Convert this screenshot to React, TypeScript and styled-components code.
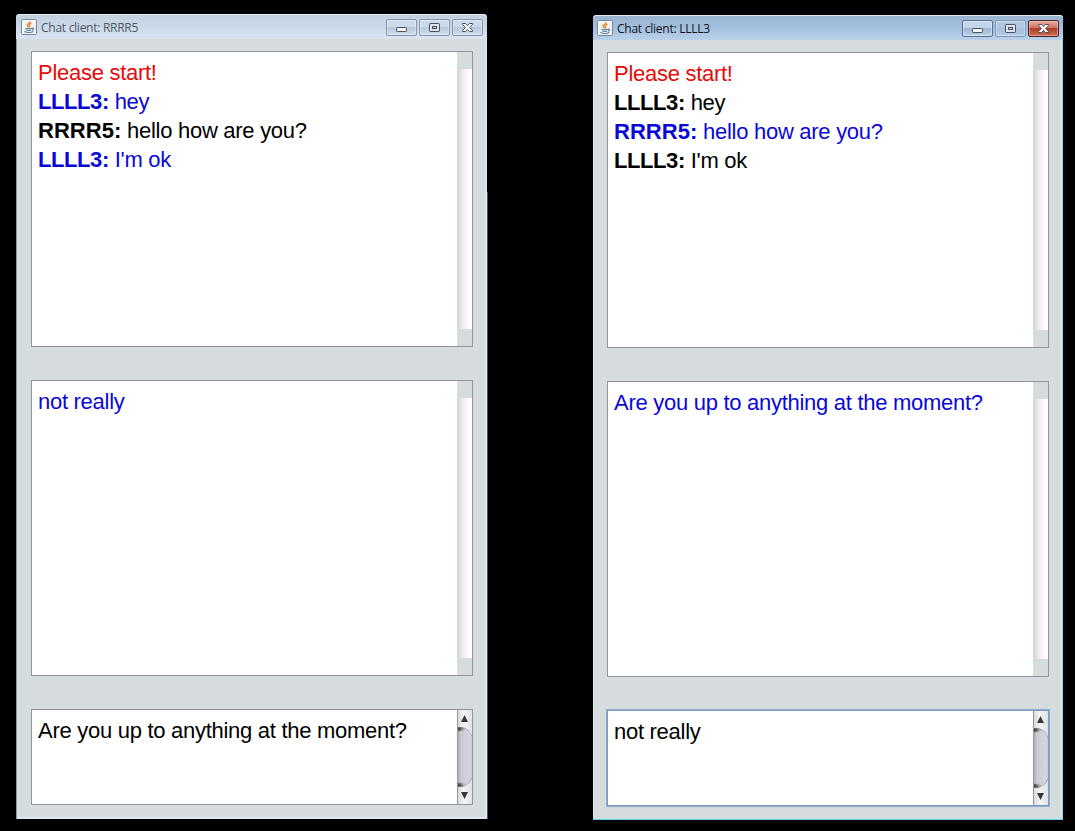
import React from "react";
import styled, { createGlobalStyle, css } from "styled-components";

const GlobalStyle = createGlobalStyle`
  * { box-sizing: border-box; }
  body { margin: 0; background: #000; overflow: hidden; }
`;

const Desktop = styled.main`
  display: flex;
  align-items: flex-start;
  gap: 106px;
  width: 1075px;
  height: 831px;
  padding: 14px 0 0 16px;
  background: #000;
`;

const Window = styled.section<{ $active?: boolean }>`
  position: relative;
  display: flex;
  flex-direction: column;
  width: ${(p) => (p.$active ? 470 : 471)}px;
  height: 805px;
  margin-top: ${(p) => (p.$active ? 1 : 0)}px;
  background: #d6dbde;
  border-radius: 4px 4px 0 0;
  box-shadow: ${(p) =>
    p.$active
      ? "inset 0 -1px #6fd3e6, inset -1px 0 #8fdcec, inset -2px 0 #d3e6ec, inset 0 -2px #c0e0e8, inset 1px 0 #d9eef3"
      : "inset 1px 0 #8b949c, inset 2px 0 #d6e4f0, inset -2px 0 #d8e8f4, inset 0 -2px #dde8f6"};
`;

const EdgeShade = styled.span`
  position: absolute;
  top: 178px;
  right: -1px;
  bottom: 0;
  width: 1px;
  background: #525659;
`;

const TitleBar = styled.header<{ $active?: boolean }>`
  display: flex;
  flex: none;
  align-items: flex-start;
  height: 25px;
  padding: 4px 4px 0 ${(p) => (p.$active ? 4 : 5)}px;
  border-top: 1px solid ${(p) => (p.$active ? "#dce9f4" : "#e2eaf1")};
  border-radius: 4px 4px 0 0;
  background: ${(p) =>
    p.$active
      ? "linear-gradient(#9ab3d0, #a4bfdf 50%, #b9d1ea)"
      : "linear-gradient(#c2cfdd, #cbd9e9 50%, #d9e5f3)"};
`;

const Title = styled.h1<{ $active?: boolean }>`
  flex: 1;
  margin: 1px 0 0 4px;
  font: 400 12px/16px "Open Sans", "Noto Sans", sans-serif;
  letter-spacing: ${(p) => (p.$active ? "-0.25px" : "-0.27px")};
  white-space: nowrap;
  color: ${(p) => (p.$active ? "#101418" : "#4e5860")};
`;

const Controls = styled.div`
  display: flex;
  gap: 2px;
`;

const tones = {
  idle: css`
    border-color: #8494ab;
    background: linear-gradient(#cddaea 45%, #b9c9dc 50%, #cddced);
  `,
  active: css`
    border-color: #5b7093;
    background: linear-gradient(#c2d5ea 45%, #9ab5d3 50%, #bcd6ed);
  `,
  muted: css`
    border-color: #8199b9;
    background: linear-gradient(#b1c8e3 45%, #a5bfdd 50%, #b3cee9);
  `,
  close: css`
    border-color: #4d1f2b;
    background: linear-gradient(#e0a08f 10%, #cf7565 45%, #b43b27 50%, #cc6e4d);
  `,
};

const ControlButton = styled.button<{ $tone: keyof typeof tones }>`
  display: block;
  width: 31px;
  height: 17px;
  padding: 0;
  border: 1px solid;
  border-radius: 2px;
  box-shadow: inset 0 0 0 1px rgba(255, 255, 255, 0.35);
  ${(p) => tones[p.$tone]}

  svg { display: block; }
`;

const Content = styled.div<{ $active?: boolean }>`
  display: flex;
  flex-direction: column;
  gap: 33px;
  padding: 12px 14px 0 ${(p) => (p.$active ? 14 : 15)}px;
`;

const Pane = styled.div<{ $small?: boolean; $focused?: boolean }>`
  display: flex;
  justify-content: space-between;
  height: ${(p) => (p.$small ? 96 : 296)}px;
  border: 1px solid ${(p) => (p.$focused ? "#8198bb" : "#8f959b")};
  background: #fff;
  ${(p) => p.$focused && "box-shadow: 0 0 0 1px #8eacd0;"}
`;

const Messages = styled.div`
  padding: 6px 0 0 6px;
  font: 400 22px/29px "Liberation Sans", Arial, sans-serif;
  letter-spacing: -0.28px;
  white-space: nowrap;
`;

const Line = styled.p<{ $color: string }>`
  margin: 0;
  color: ${(p) => p.$color};
`;

const Sender = styled.b<{ $tracking: number }>`
  letter-spacing: ${(p) => p.$tracking}px;
`;

const Track = styled.div`
  display: flex;
  flex-direction: column;
  justify-content: space-between;
  width: 15px;
  background: linear-gradient(90deg, #d2ced4, #e8e5eb 28%, #f8f6fb 60%, #fff);
`;

const TrackCap = styled.span`
  height: 17px;
  background: #d6dbde;
`;

const ScrollSvg = styled.svg`
  display: block;
  flex: none;
`;

const BLUE = "#0a08d8";
const RED = "#e60a0a";
const BLACK = "#000";

function JavaIcon() {
  return (
    <svg width="16" height="16" viewBox="0 0 16 16" fill="none">
      <rect x=".5" y=".5" width="15" height="15" rx="1.2" fill="#f1f3f4" stroke="#71869c" />
      <path d="M1.5 14.5V1.5h13" stroke="#fff" />
      <path d="M9.2 2C9.8 4 5.5 4.6 6.1 6.5c.2.7 1.2 1.1 1.2 2M10.5 4.4C7.8 5.4 8 6 8.5 6.8c.4.7 0 1.2-.4 1.7" stroke="#e58a37" strokeWidth="1.4" />
      <path d="M4.5 9.2c1.8.7 4.8.6 6.3 0M5.2 11c1.6.5 3.7.5 5 0M10.8 9.3c2.5-.8 2.3 1.4.2 2M3.3 12.6c2.5 1 7 .9 9.2-.1" stroke="#547b9b" strokeWidth="1.1" />
    </svg>
  );
}

function ControlGlyph({ kind }: { kind: "min" | "max" | "close" }) {
  return (
    <svg width="29" height="15" viewBox="0 0 29 15">
      {kind === "min" && (
        <rect x="9.5" y="7.5" width="10" height="4" rx=".7" fill="#f4f5f7" stroke="#4b515c" />
      )}
      {kind === "max" && (
        <>
          <rect x="9.5" y="3.5" width="10" height="8" rx=".7" fill="#dde3ea" stroke="#4b515c" />
          <rect x="12.5" y="6.5" width="4" height="2" fill="#b4c6da" stroke="#4b515c" />
        </>
      )}
      {kind === "close" && (
        <path
          d="M9.5 3.5h3l2 2.1 2-2.1h3v1l-2.8 3 2.8 3v1h-3l-2-2.1-2 2.1h-3v-1l2.8-3-2.8-3z"
          fill="#fafafa"
          stroke="#4b4e5a"
        />
      )}
    </svg>
  );
}

function ScrollBar({ id }: { id: string }) {
  return (
    <ScrollSvg width="15" height="94" viewBox="0 0 15 94">
      <defs>
        <linearGradient id={`${id}-face`}>
          <stop stopColor="#d4d5dc" />
          <stop offset=".45" stopColor="#f4f4f7" />
          <stop offset="1" stopColor="#e0e1e7" />
        </linearGradient>
        <linearGradient id={`${id}-thumb`}>
          <stop stopColor="#a4a4ac" />
          <stop offset=".25" stopColor="#c9c9d1" />
          <stop offset=".8" stopColor="#d6d6df" />
          <stop offset="1" stopColor="#cdcdd5" />
        </linearGradient>
        <radialGradient id={`${id}-shade`} cx="0" cy=".5" r="1">
          <stop stopColor="#222228" />
          <stop offset=".45" stopColor="#4e4e55" stopOpacity=".75" />
          <stop offset="1" stopColor="#aaaab2" stopOpacity="0" />
        </radialGradient>
        <clipPath id={`${id}-clip`}>
          <path d="M0 17h4q8 1 11 9v42q-3 8-11 9H0z" />
        </clipPath>
      </defs>
      <rect width="15" height="94" fill={`url(#${id}-face)`} />
      <g clipPath={`url(#${id}-clip)`}>
        <rect y="17" width="15" height="60" fill={`url(#${id}-thumb)`} />
        <ellipse cx="0" cy="17" rx="10" ry="5" fill={`url(#${id}-shade)`} />
        <ellipse cx="0" cy="77" rx="10" ry="5" fill={`url(#${id}-shade)`} />
        <rect y="16" width="9" height="5" fill={`url(#${id}-shade)`} />
        <rect y="73" width="9" height="5" fill={`url(#${id}-shade)`} />
        <path d="M0 17h4q8 1 11 9M0 77h4q8-1 11-9" fill="none" stroke="#85858d" />
      </g>
      <path d="M.5 0v94" stroke="#9497a0" />
      <path d="M4 12L7.5 5 11 12zM4 82h7l-3.5 7z" fill="#35363b" />
    </ScrollSvg>
  );
}

function EmptyTrack() {
  return (
    <Track>
      <TrackCap />
      <TrackCap />
    </Track>
  );
}

type Message = { from?: string; text: string; color: string };

type ChatProps = {
  name: string;
  active?: boolean;
  log: Message[];
  remote: string;
  draft: string;
};

const senderTracking = (from: string) => (from.startsWith("L") ? -0.42 : 0.02);

function ChatWindow({ name, active, log, remote, draft }: ChatProps) {
  return (
    <Window $active={active}>
      <TitleBar $active={active}>
        <JavaIcon />
        <Title $active={active}>Chat client: {name}</Title>
        <Controls>
          <ControlButton $tone={active ? "active" : "idle"} aria-label="Minimize">
            <ControlGlyph kind="min" />
          </ControlButton>
          <ControlButton $tone={active ? "muted" : "idle"} aria-label="Maximize">
            <ControlGlyph kind="max" />
          </ControlButton>
          <ControlButton $tone={active ? "close" : "idle"} aria-label="Close">
            <ControlGlyph kind="close" />
          </ControlButton>
        </Controls>
      </TitleBar>
      <Content $active={active}>
        <Pane>
          <Messages>
            {log.map((m, i) => (
              <Line key={i} $color={m.color}>
                {m.from && <Sender $tracking={senderTracking(m.from)}>{m.from}:</Sender>} {m.text}
              </Line>
            ))}
          </Messages>
          <EmptyTrack />
        </Pane>
        <Pane>
          <Messages>
            <Line $color={BLUE}>{remote}</Line>
          </Messages>
          <EmptyTrack />
        </Pane>
        <Pane $small $focused={active}>
          <Messages>
            <Line $color={BLACK}>{draft}</Line>
          </Messages>
          <ScrollBar id={name} />
        </Pane>
      </Content>
      {!active && <EdgeShade />}
    </Window>
  );
}

export default function App() {
  return (
    <>
      <GlobalStyle />
      <Desktop>
        <ChatWindow
          name="RRRR5"
          log={[
            { text: "Please start!", color: RED },
            { from: "LLLL3", text: "hey", color: BLUE },
            { from: "RRRR5", text: "hello how are you?", color: BLACK },
            { from: "LLLL3", text: "I'm ok", color: BLUE },
          ]}
          remote="not really"
          draft="Are you up to anything at the moment?"
        />
        <ChatWindow
          name="LLLL3"
          active
          log={[
            { text: "Please start!", color: RED },
            { from: "LLLL3", text: "hey", color: BLACK },
            { from: "RRRR5", text: "hello how are you?", color: BLUE },
            { from: "LLLL3", text: "I'm ok", color: BLACK },
          ]}
          remote="Are you up to anything at the moment?"
          draft="not really"
        />
      </Desktop>
    </>
  );
}
